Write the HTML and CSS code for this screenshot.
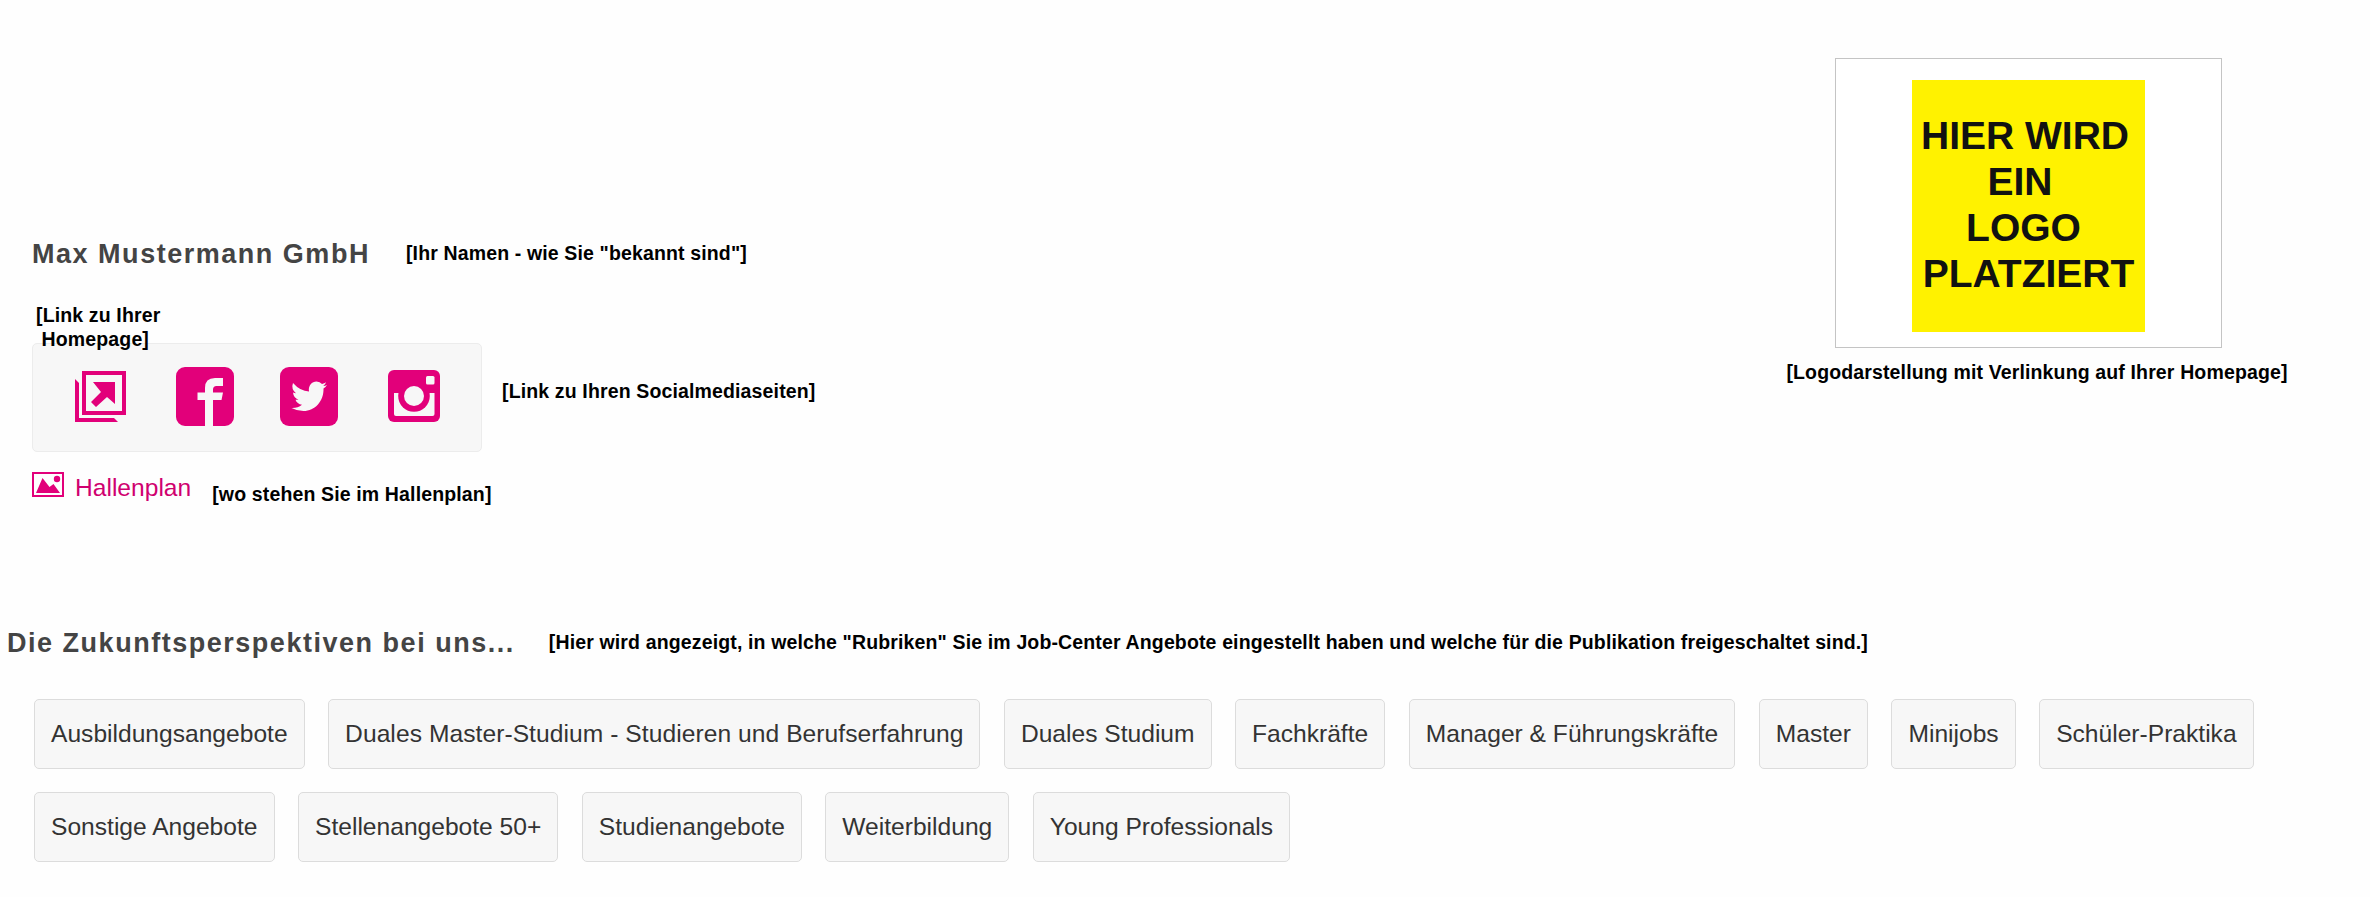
FILE: index.html
```html
<!DOCTYPE html>
<html lang="de">
<head>
  <meta charset="UTF-8">
  <meta name="viewport" content="width=device-width, initial-scale=1.0">
  <title>Max Mustermann GmbH</title>
  <link rel="stylesheet" href="styles.css">
</head>
<body>
  <div class="profile">
    <div class="company">
      <div class="name-row">
        <h1>Max Mustermann GmbH</h1>
        <span class="note">[Ihr Namen - wie Sie "bekannt sind"]</span>
      </div>
      <div class="links-row">
        <div class="links">
          <span class="note note-home">[Link zu Ihrer<br>&nbsp;Homepage]</span>
          <a class="link-home" href="#">
            <svg width="51" height="51" viewBox="0 0 51 51">
              <path fill-rule="evenodd" d="M7 0h44v44H7zM11 4v36h36V4z"/>
              <path d="M0 8l4 4v35h35l4 4H0z"/>
              <path d="M18 11h22v22l-8-7-11 10-5-5 10-10z"/>
            </svg>
          </a>
          <a class="link-fb" href="#">
            <svg width="58" height="59" viewBox="0 0 58 59">
              <path d="M9 0h40a9 9 0 0 1 9 9v41a9 9 0 0 1-9 9H37V33h8.500l1.500-7.500H37v-3q0-3.500 3.500-3.500H47v-8h-8q-10 0-10 10v4.500h-7.500V33H29v26H9a9 9 0 0 1-9-9V9a9 9 0 0 1 9-9z"/>
            </svg>
          </a>
          <a class="link-tw" href="#">
            <svg width="58" height="59" viewBox="0 0 58 59">
              <rect width="58" height="59" rx="9"/>
              <path fill="#f7f7f7" d="M13 16q7 8 16 8.500c-1-6 3-10 7.500-10q3.500 0 5.500 2.500 2.500-.5 4-1.700-.5 2.200-2.700 3.700 2-.2 3.700-1-1.300 2.200-3.500 3.500C44 34 35 44 23.500 44Q17 44 11.500 41q6 .3 10.500-3.200-5-.8-6.500-5h3q-5-2-5.500-7.300 1.500.8 3 .8-5.200-4.300-3-10.300z"/>
            </svg>
          </a>
          <a class="link-ig" href="#">
            <svg width="52" height="52" viewBox="0 0 52 52">
              <rect width="52" height="52" rx="6"/>
              <path fill="#f7f7f7" d="M6 23h40.500v21q0 2-2 2H8q-2 0-2-2z"/>
              <circle cx="26" cy="26" r="15.800"/>
              <circle cx="26" cy="26" r="10" fill="#f7f7f7"/>
              <rect x="38" y="6" width="8.500" height="8.500" rx="1.500" fill="#f7f7f7"/>
            </svg>
          </a>
        </div>
        <span class="note">[Link zu Ihren Socialmediaseiten]</span>
      </div>
      <div class="hall-row">
        <a class="hall" href="#">
          <svg width="32" height="25" viewBox="0 0 32 25">
            <path fill-rule="evenodd" d="M0 0h32v25H0zM2 2v21h28V2z"/>
            <path d="M4 21L10.500 6l7 9 4-3L28 21z"/>
            <circle cx="25" cy="7" r="3.200"/>
          </svg>
          Hallenplan
        </a>
        <span class="note">[wo stehen Sie im Hallenplan]</span>
      </div>
    </div>
    <div class="logo-column">
      <a class="logo-frame" href="#">
        <div class="logo">
          <div class="hier">HIER WIRD</div>
          <div class="ein">EIN</div>
          <div class="mid">LOGO</div>
          <div>PLATZIERT</div>
        </div>
      </a>
      <span class="note">[Logodarstellung mit Verlinkung auf Ihrer Homepage]</span>
    </div>
  </div>

  <div class="section-head">
    <h2>Die Zukunftsperspektiven bei uns...</h2>
    <span class="note">[Hier wird angezeigt, in welche "Rubriken" Sie im Job-Center Angebote eingestellt haben und welche für die Publikation freigeschaltet sind.]</span>
  </div>
  <div class="offers">
    <a href="#">Ausbildungsangebote</a>
    <a class="long" href="#">Duales Master-Studium - Studieren und Berufserfahrung</a>
    <a href="#">Duales Studium</a>
    <a href="#">Fachkräfte</a>
    <a href="#">Manager &amp; Führungskräfte</a>
    <a href="#">Master</a>
    <a href="#">Minijobs</a>
    <a href="#">Schüler-Praktika</a>
    <a href="#">Sonstige Angebote</a>
    <a href="#">Stellenangebote 50+</a>
    <a href="#">Studienangebote</a>
    <a href="#">Weiterbildung</a>
    <a href="#">Young Professionals</a>
  </div>
</body>
</html>
```
FILE: styles.css
```css
body {
  margin: 0;
  font-family: Arial, "Liberation Sans", sans-serif;
  background: #fefefe;
  color: #333;
}
a {
  color: #d0006f;
  text-decoration: none;
}
svg {
  display: block;
  fill: #e2007a;
}
h1, h2 {
  margin: 0;
  font-size: 27px;
  line-height: 40px;
  letter-spacing: 1.52px;
  color: #444;
  white-space: nowrap;
}
.note {
  font-size: 19.5px;
  font-weight: bold;
  line-height: 24px;
  letter-spacing: 0.14px;
  color: #000;
  white-space: nowrap;
}
.profile {
  display: flex;
  justify-content: space-between;
  height: 623px;
}
.company {
  padding: 234px 0 0 32px;
}
.name-row {
  display: flex;
  gap: 36px;
  height: 40px;
}
.name-row .note {
  margin-top: 7px;
}
.links-row {
  display: flex;
  gap: 20px;
  margin-top: 69px;
}
.links-row > .note {
  margin-top: 36px;
}
.links {
  position: relative;
  display: flex;
  box-sizing: border-box;
  width: 450px;
  height: 109px;
  border: 1px solid #ececec;
  border-radius: 5px;
  background: #f7f7f7;
}
.note-home {
  position: absolute;
  left: 3px;
  top: -41px;
}
.link-home {
  margin: 27px 0 0 42px;
}
.link-fb {
  margin: 23px 0 0 50px;
}
.link-tw {
  margin: 23px 0 0 46px;
}
.link-ig {
  margin: 26px 0 0 50px;
}
.hall-row {
  display: flex;
  gap: 21px;
  margin-top: 20px;
}
.hall {
  display: flex;
  gap: 11px;
  font-size: 24.6px;
  line-height: 32px;
}
.hall-row .note {
  margin-top: 10px;
}
.logo-column {
  display: flex;
  flex-direction: column;
  align-items: center;
  width: 502px;
  padding: 58px 82px 0 0;
}
.logo-frame {
  box-sizing: border-box;
  width: 387px;
  height: 290px;
  padding: 21px 76px;
  margin-right: 17px;
  border: 1px solid #c4c4c4;
  background: #fff;
}
.logo {
  box-sizing: border-box;
  width: 233px;
  height: 252px;
  padding-top: 33px;
  background: #fff200;
  color: #111;
  font-size: 39px;
  font-weight: bold;
  line-height: 46px;
  text-align: center;
}
.hier {
  padding-right: 7px;
}
.ein {
  padding-right: 17px;
}
.mid {
  padding-right: 10px;
}
.logo-column .note {
  margin-top: 12px;
}
.section-head {
  display: flex;
  gap: 34px;
  padding-left: 7px;
}
.section-head .note {
  margin-top: 7px;
}
.offers {
  display: flex;
  flex-wrap: wrap;
  gap: 23px 23.5px;
  padding: 36px 80px 0 34px;
}
.offers a {
  padding: 0 16px;
  border: 1px solid #dcdcdc;
  border-radius: 5px;
  background: #f7f7f7;
  color: #333;
  font-size: 24.6px;
  line-height: 68px;
}
.offers .long {
  letter-spacing: 0.06px;
}
```
